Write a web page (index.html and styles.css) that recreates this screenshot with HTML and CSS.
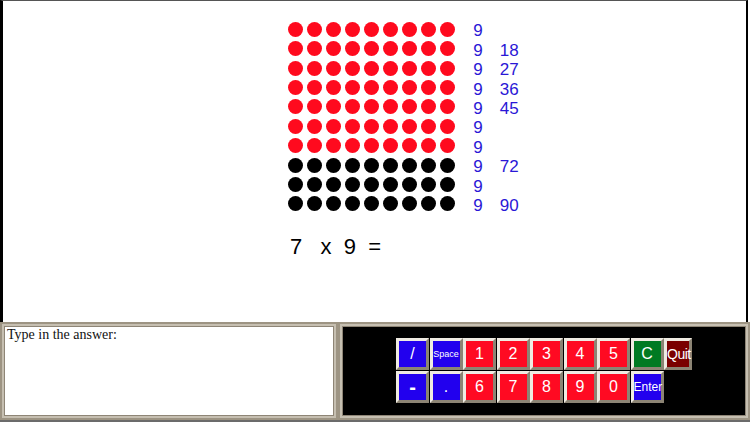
FILE: index.html
```html
<!DOCTYPE html>
<html lang="en">
<head>
    <meta charset="UTF-8">
    <meta name="viewport" content="width=device-width, initial-scale=1.0">
    <title>Times Tables</title>
    <link rel="stylesheet" href="styles.css">
</head>
<body>

    <div class="screen">
        <div class="board">
            <div class="abacus" id="abacus"></div>
            <div class="question">7   x  9  =</div>
        </div>

        <div class="console">
            <div class="panel answer-panel">
                <div class="panel-body answer">Type in the answer:</div>
            </div>
            <div class="panel keypad-panel">
                <div class="panel-body keypad">
                    <div class="key-row">
                        <button class="key blue">/</button>
                        <button class="key blue small">Space</button>
                        <button class="key red">1</button>
                        <button class="key red">2</button>
                        <button class="key red">3</button>
                        <button class="key red">4</button>
                        <button class="key red">5</button>
                        <button class="key green">C</button>
                        <button class="key maroon quit">Quit</button>
                    </div>
                    <div class="key-row">
                        <button class="key blue minus">-</button>
                        <button class="key blue">.</button>
                        <button class="key red">6</button>
                        <button class="key red">7</button>
                        <button class="key red">8</button>
                        <button class="key red">9</button>
                        <button class="key red">0</button>
                        <button class="key blue enter">Enter</button>
                    </div>
                </div>
            </div>
        </div>
    </div>

    <script>
        // 10 rows of 9 beads, the first 7 rows are red (7 x 9)
        let abacus = document.getElementById('abacus');
        let rows = 10;
        let cols = 9;
        let shown = 7;
        let sums = { 2: 18, 3: 27, 4: 36, 5: 45, 8: 72, 10: 90 };

        for (let r = 1; r <= rows; r++) {
            for (let c = 0; c < cols; c++) {
                let dot = document.createElement('span');
                dot.className = r <= shown ? 'dot red-dot' : 'dot';
                abacus.appendChild(dot);
            }
            let nine = document.createElement('span');
            nine.className = 'count';
            nine.textContent = cols;
            abacus.appendChild(nine);

            let sum = document.createElement('span');
            sum.className = 'sum';
            sum.textContent = sums[r] || '';
            abacus.appendChild(sum);
        }
    </script>

</body>
</html>
```

FILE: styles.css
```css
body {
    margin: 0;
    overflow: hidden;
    background: #fff;
    font-family: "Liberation Sans", Arial, sans-serif;
}

.screen {
    width: 750px;
    height: 422px;
    display: flex;
    flex-direction: column;
}

/* Top drawing area */
.board {
    height: 316px;
    background: #fff;
    border-top: 1px solid #555;
    border-left: 3px solid #000;
    border-right: 2px solid #000;
    margin-right: 2px;
    padding: 18.7px 0 0 282.5px;
}

.abacus {
    display: grid;
    grid-template-columns: repeat(9, 19.1px) 42.5px 30px;
    grid-auto-rows: 19.4px;
    align-items: center;
}

.dot {
    width: 15px;
    height: 15px;
    border-radius: 50%;
    background: #000;
    justify-self: center;
}

.red-dot {
    background: #ff0a1e;
}

.count,
.sum {
    font-size: 17px;
    line-height: 19.4px;
    color: #2a17d6;
    padding-top: 3.5px;
}

.count {
    padding-left: 16px;
}

.question {
    margin: 20px 0 0 4.5px;
    font-size: 22px;
    white-space: pre;
    color: #000;
}

/* Bottom console */
.console {
    height: 105px;
    display: flex;
    background: #6b6b6b;
    padding-bottom: 2px;
    box-sizing: border-box;
}

.panel {
    background: #c6bfb1;
    border: 2px solid #9d9483;
    padding: 2px;
    display: flex;
}

.answer-panel {
    width: 338px;
    box-sizing: border-box;
}

.keypad-panel {
    flex: 1;
}

.panel-body {
    flex: 1;
    border: 1px solid #8e8576;
}

.answer {
    background: #fff;
    font-family: "Liberation Serif", "Times New Roman", serif;
    font-size: 14px;
    color: #111;
    padding-left: 2px;
}

.keypad {
    background: #000;
    display: flex;
    flex-direction: column;
    align-items: center;
    justify-content: center;
    gap: 1px;
}

.key-row {
    display: flex;
    gap: 0.5px;
    width: 296px;
}

.key {
    width: 33px;
    height: 32px;
    padding: 0;
    border: 3px solid;
    border-color: #efebe2 #8c8474 #8c8474 #efebe2;
    color: #fff;
    font-family: "Liberation Sans", Arial, sans-serif;
    font-size: 16px;
    line-height: 1;
}

.blue {
    background: #2200ee;
}

.red {
    background: #ff0a22;
}

.green {
    background: #007a22;
}

.maroon {
    background: #7a0000;
}

.small {
    font-size: 9px;
}

.quit {
    width: 28px;
    font-size: 14px;
    letter-spacing: -0.5px;
}

.enter {
    font-size: 12px;
}

.minus {
    font-size: 20px;
    font-weight: bold;
}
```
